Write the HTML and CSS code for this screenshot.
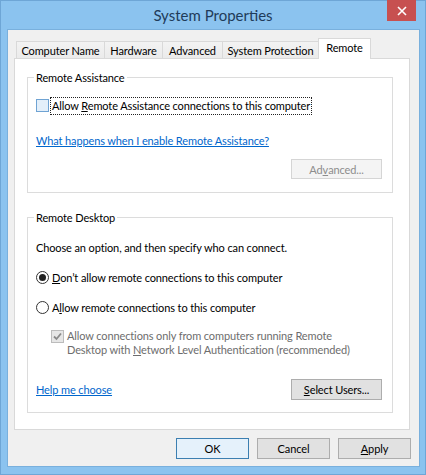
FILE: index.html
```html
<!DOCTYPE html>
<html>
<head>
<meta charset="utf-8">
<link rel="stylesheet" href="styles.css">
</head>
<body>
<div class="window">
  <div class="titlebar">
    <div class="title">System Properties</div>
    <div class="close">
      <svg width="10" height="10" viewBox="0 0 10 10"><path d="M1 1 L9 9 M9 1 L1 9" stroke="#fff" stroke-width="1.6" fill="none"/></svg>
    </div>
  </div>
  <div class="client">
    <div class="tabs">
      <div class="tab tab-cn">Computer Name</div>
      <div class="tab tab-hw">Hardware</div>
      <div class="tab tab-adv">Advanced</div>
      <div class="tab tab-sp">System Protection</div>
      <div class="tab tab-rm selected">Remote</div>
    </div>
    <div class="panel">
      <div class="group group-ra">
        <div class="legend">Remote Assistance</div>
        <div class="row check-row">
          <span class="checkbox hover"></span>
          <span class="focus">Allow <u>R</u>emote Assistance connections to this computer</span>
        </div>
        <div class="row link-row">
          <span class="link">What happens when I enable Remote Assistance?</span>
        </div>
        <div class="btn-row">
          <div class="btn disabled btn-wide">Ad<u>v</u>anced...</div>
        </div>
      </div>
      <div class="group group-rd">
        <div class="legend">Remote Desktop</div>
        <div class="row text-row">Choose an option, and then specify who can connect.</div>
        <div class="row radio-row first-radio">
          <span class="radio checked"><span class="dot"></span></span>
          <span><u>D</u>on’t allow remote connections to this computer</span>
        </div>
        <div class="row radio-row">
          <span class="radio"></span>
          <span>A<u>l</u>low remote connections to this computer</span>
        </div>
        <div class="nla">
          <span class="checkbox disabled-box">
            <svg width="11" height="11" viewBox="0 0 11 11"><path d="M2 5.5 L4.5 8 L9 2.5" stroke="#8a8a8a" stroke-width="1.8" fill="none"/></svg>
          </span>
          <span class="nla-text">Allow connections only from computers running Remote<br>Desktop with <u>N</u>etwork Level Authentication (recommended)</span>
        </div>
        <div class="btn-row split">
          <span class="link">Help me choose</span>
          <div class="btn btn-wide"><u>S</u>elect Users...</div>
        </div>
      </div>
    </div>
    <div class="dialog-buttons">
      <div class="btn default">OK</div>
      <div class="btn">Cancel</div>
      <div class="btn"><u>A</u>pply</div>
    </div>
  </div>
</div>
</body>
</html>
```
FILE: styles.css
```css
* { box-sizing: border-box; }
html, body { margin: 0; padding: 0; }
body {
  width: 426px;
  height: 475px;
  overflow: hidden;
  font-family: "Lato", "Liberation Sans", sans-serif;
  font-size: 11px;
  letter-spacing: -0.12px;
  color: #000;
}
.window {
  width: 426px;
  height: 475px;
  background: #8bc3ef;
  border: 1px solid #6ea6d6;
  display: flex;
  flex-direction: column;
  position: relative;
}
.titlebar {
  height: 29px;
  display: flex;
  align-items: center;
  justify-content: center;
  flex: none;
}
.title {
  font-size: 15px;
  letter-spacing: 0;
  color: #1f3b5a;
  margin-top: -1px;
}
.close {
  position: absolute;
  top: -1px;
  right: 9px;
  width: 29px;
  height: 21px;
  background: #c75050;
  display: flex;
  align-items: center;
  justify-content: center;
}
.client {
  flex: 1;
  margin: 0 6px 8px 7px;
  background: #f0f0f0;
  box-shadow: 0 0 0 1px #79b0dd;
  padding: 8px 9px 7px 6px;
  display: flex;
  flex-direction: column;
}
.tabs {
  display: flex;
  align-items: flex-end;
  height: 21px;
  padding-left: 2px;
  margin-bottom: -1px;
  position: relative;
  z-index: 1;
}
.tab {
  height: 17px;
  margin-bottom: 1px;
  margin-left: -1px;
  border: 1px solid #d9d9d9;
  border-bottom: none;
  background: linear-gradient(#f3f3f3, #ebebeb);
  display: flex;
  align-items: center;
  justify-content: center;
  white-space: nowrap;
}
.tab-cn { width: 89px; margin-left: 0; }
.tab-hw { width: 59px; }
.tab-adv { width: 61px; }
.tab-sp { width: 97px; }
.tab-rm { width: 53px; }
.tab.selected {
  height: 21px;
  margin-bottom: 0;
  background: #fff;
  padding-bottom: 3px;
}
.panel {
  background: #fff;
  border: 1px solid #d9d9d9;
  padding: 18px 16px 15px 12px;
  height: 372px;
}
.group {
  border: 1px solid #dcdcdc;
  padding: 0 10px 13px 8px;
}
.group-rd {
  margin-top: 24px;
  padding-bottom: 12px;
}
.legend {
  width: fit-content;
  height: 15px;
  line-height: 15px;
  margin-top: -8px;
  margin-left: -2px;
  padding: 0 2px;
  background: #fff;
}
.row {
  display: flex;
  align-items: center;
  height: 15px;
  line-height: 15px;
  white-space: nowrap;
}
.check-row { margin-top: 13px; }
.link-row { margin-top: 20px; }
.checkbox {
  width: 13px;
  height: 13px;
  border: 1px solid #333;
  background: #fff;
  margin-right: 2px;
  flex: none;
  display: flex;
  align-items: center;
  justify-content: center;
}
.checkbox.hover {
  border-color: #6fa3d3;
  background: #e3effa;
}
.focus {
  outline: 1px dotted #222;
  padding: 1px 1px 1px 1px;
  line-height: 14px;
}
.link {
  color: #0066cc;
  text-decoration: underline;
  line-height: 15px;
}
.btn-row {
  display: flex;
  justify-content: flex-end;
  align-items: center;
  margin-top: 11px;
}
.btn-row.split {
  justify-content: space-between;
  margin-top: 22px;
}
.btn {
  width: 73px;
  height: 21px;
  border: 1px solid #adadad;
  background: #e1e1e1;
  display: flex;
  align-items: center;
  justify-content: center;
  white-space: nowrap;
}
.btn-wide { width: 91px; }
.btn.disabled {
  background: #f4f4f4;
  border-color: #d5d5d5;
  color: #8d8d8d;
  height: 20px;
}
.btn.default {
  border-color: #3c7fb1;
  background: #e5f1fb;
}
.text-row { margin-top: 15px; }
.radio-row { margin-top: 15px; }
.radio {
  width: 13px;
  height: 13px;
  border: 1px solid #333;
  border-radius: 50%;
  background: #fff;
  margin-right: 3px;
  flex: none;
  display: flex;
  align-items: center;
  justify-content: center;
}
.dot {
  width: 7px;
  height: 7px;
  border-radius: 50%;
  background: #222;
}
.nla {
  display: flex;
  align-items: flex-start;
  margin-top: 14px;
  margin-left: 15px;
  line-height: 14px;
  color: #6d6d6d;
}
.disabled-box {
  background: #e6e6e6;
  border-color: #bcbcbc;
  margin-top: 1px;
  margin-right: 3px;
}
.nla-text { white-space: nowrap; }
.dialog-buttons {
  display: flex;
  justify-content: flex-end;
  gap: 8px;
  margin-top: 8px;
  margin-right: -1px;
}
```
